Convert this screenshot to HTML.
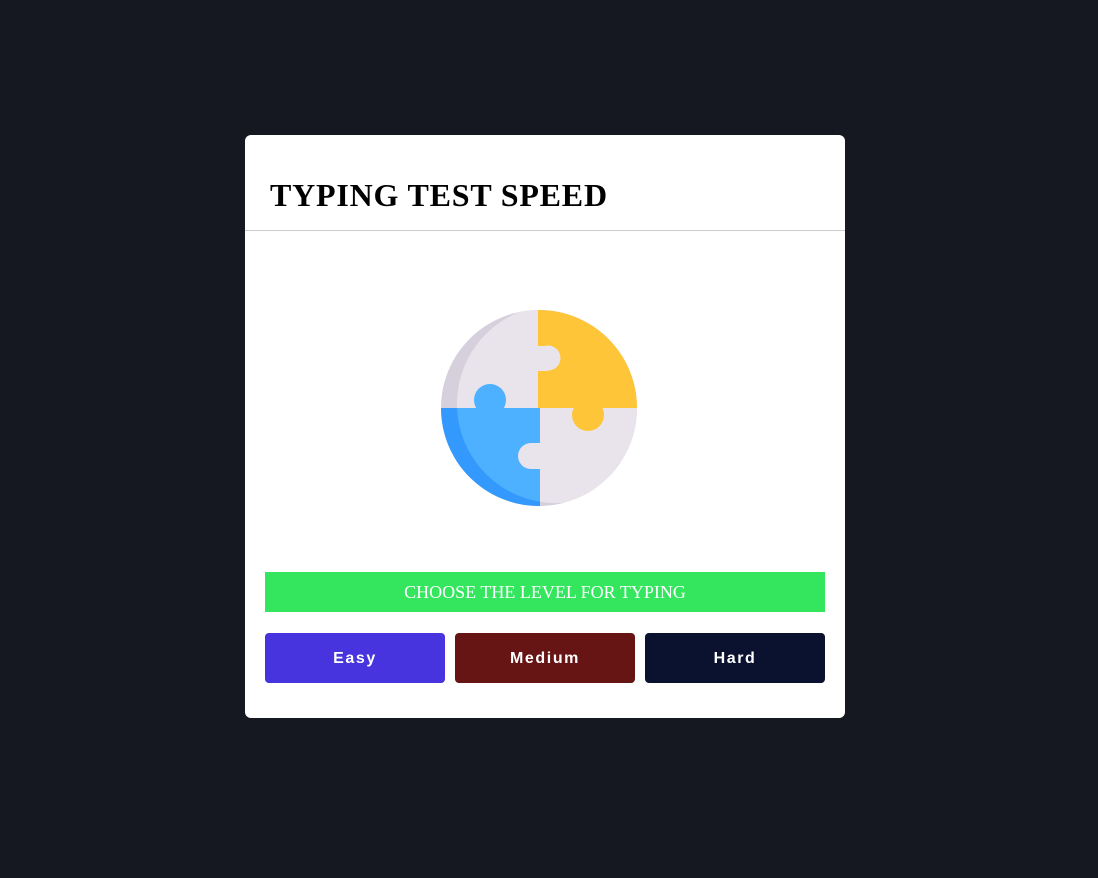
<!DOCTYPE html>
<html><head><meta charset="utf-8"><style>
*{margin:0;padding:0;box-sizing:border-box}
html,body{width:1098px;height:878px;background:#161821;overflow:hidden}
.card{position:absolute;left:245px;top:135px;width:600px;height:583px;background:#fff;border-radius:6px}
h1{position:absolute;left:25px;top:42px;font-family:"Liberation Serif",serif;font-weight:bold;font-size:32px;letter-spacing:0.8px;color:#000}
.line{position:absolute;left:0;top:95px;width:600px;height:1px;background:#ccc}
svg{position:absolute;left:0;top:0}
.bar{position:absolute;left:20px;top:437px;width:560px;height:40px;background:#33e65e;color:#fff;font-family:"Liberation Serif",serif;font-size:18px;text-align:center;line-height:40px}
.btn{position:absolute;top:498px;width:180px;height:50px;border-radius:4px;color:#fff;font-family:"Liberation Sans",sans-serif;font-weight:bold;font-size:16px;letter-spacing:1.6px;text-align:center;line-height:51px}
</style></head><body>
<div class="card">
<h1>TYPING TEST SPEED</h1>
<div class="line"></div>
<svg width="600" height="583" viewBox="245 135 600 583">
<defs><clipPath id="c"><circle cx="539" cy="408" r="98"/></clipPath><clipPath id="d"><circle cx="556" cy="404" r="99"/></clipPath></defs>
<g clip-path="url(#c)">
<rect x="430" y="300" width="220" height="220" fill="#d6d0dc"/>
<circle cx="556" cy="404" r="99" fill="#e9e4ec"/>
<rect x="538" y="300" width="110" height="108" fill="#ffc539"/>
<circle cx="588" cy="415" r="16" fill="#ffc539"/>
<rect x="538" y="346" width="10" height="25" fill="#e9e4ec"/>
<circle cx="548" cy="358" r="12.5" fill="#e9e4ec"/>
<rect x="430" y="408" width="110" height="110" fill="#3499fc"/>
<rect x="430" y="408" width="110" height="110" fill="#4db1ff" clip-path="url(#d)"/>
<circle cx="490" cy="400" r="16" fill="#4db1ff"/>
<rect x="530" y="443" width="10" height="26" fill="#e9e4ec"/>
<circle cx="531" cy="456" r="13" fill="#e9e4ec"/>
</g>
</svg>
<div class="bar">CHOOSE THE LEVEL FOR TYPING</div>
<div class="btn" style="left:20px;background:#4734de">Easy</div>
<div class="btn" style="left:210px;background:#661414">Medium</div>
<div class="btn" style="left:400px;background:#0b1230">Hard</div>
</div>
</body></html>
